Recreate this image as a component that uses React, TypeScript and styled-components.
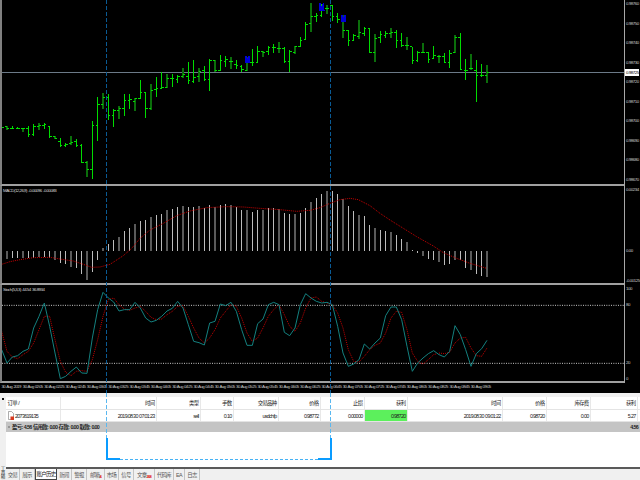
import React from "react"
import styled, { createGlobalStyle } from "styled-components"

const GlobalStyle = createGlobalStyle`
  html, body {
    margin: 0;
    padding: 0;
    background: #fff;
  }
  * {
    box-sizing: border-box;
  }
`

const Page = styled.div`
  position: relative;
  width: 640px;
  height: 480px;
  overflow: hidden;
  display: flex;
  flex-direction: column;
  font-family: "Liberation Sans", "Noto Sans CJK SC", sans-serif;
  font-size: 5.4px;
  letter-spacing: -0.7px;
  word-spacing: 0.6px;
  color: #222;
`

const ChartArea = styled.div`
  height: 393px;
  background: #000;
  display: flex;
  flex-direction: column;
  flex: none;
`

const Pane = styled.div<{ $h: number }>`
  height: ${p => p.$h}px;
  display: flex;
  flex: none;
`

const Plot = styled.div`
  position: relative;
  width: 624px;
  flex: none;
  border-left: 2px solid #808080;
  border-bottom: 2px solid #a0a0a0;

  svg {
    display: block;
  }
`

const PaneTitle = styled.span`
  position: absolute;
  left: 1px;
  top: 2px;
  font-size: 4.4px;
  letter-spacing: -0.5px;
  color: #d8d8d8;
  white-space: nowrap;
`

const PriceAxis = styled.div<{ $rows?: string }>`
  position: relative;
  flex: 1;
  min-width: 0;
  border-left: 1px solid #a8a8a8;
  color: #c8c8c8;
  font-size: 4.4px;
  letter-spacing: -0.45px;
  padding-left: 1px;
  padding-top: 1px;
  ${p =>
    p.$rows
      ? `display: grid; grid-template-rows: ${p.$rows};`
      : `display: flex; flex-direction: column; justify-content: space-between; padding-bottom: 3px;`}
`

const AxisLabel = styled.span`
  line-height: 6px;
  white-space: nowrap;
`

const LastPrice = styled.span`
  position: absolute;
  left: 0;
  top: 69px;
  width: 14px;
  height: 7px;
  line-height: 7px;
  padding-left: 1px;
  background: #fff;
  color: #000;
`

const TimeAxis = styled.div`
  height: 10px;
  display: flex;
  padding-left: 1px;
  color: #c8c8c8;
  font-size: 4.4px;
  letter-spacing: -0.6px;
`

const TimeLabel = styled.span`
  flex: 0 0 21.33px;
  min-width: 0;
  line-height: 8px;
  white-space: nowrap;
  padding-left: 0.5px;
`

const Panel = styled.div`
  flex: 1;
  display: flex;
  background: #f0f0f0;
`

const SideStrip = styled.div`
  width: 6px;
  flex: none;
  display: flex;
  flex-direction: column;
  justify-content: space-between;
  align-items: flex-start;
  padding-top: 5px;
`

const SideMark = styled.i`
  display: block;
  width: 2px;
  height: 2px;
  margin-left: 2px;
  background: #111;
`

const SideTitle = styled.span`
  writing-mode: vertical-rl;
  font-size: 4.6px;
  line-height: 5px;
  color: #333;
  height: 14px;
`

const Main = styled.div`
  flex: 1;
  min-width: 0;
  display: flex;
  flex-direction: column;
  padding-top: 4px;
`

const Table = styled.div`
  flex: 1;
  background: #fff;
  border-bottom: 2px solid #5a5a5a;
`

const Row = styled.div<{ $h: number }>`
  display: grid;
  grid-template-columns: 55px 96px 44px 33px 45px 42px 44px 43px 95px 44px 44px 47px;
  height: ${p => p.$h}px;
  border-bottom: 1px solid #e4e4e4;
`

const Cell = styled.div<{ $left?: boolean; $profit?: boolean }>`
  display: flex;
  align-items: center;
  justify-content: ${p => (p.$left ? "flex-start" : "flex-end")};
  gap: 1.5px;
  padding: 0 1.5px;
  white-space: nowrap;
  border-right: 1px solid #e8e8e8;
  background: ${p => (p.$profit ? "#5cf05c" : "transparent")};
`

const Summary = styled.div`
  height: 10px;
  display: flex;
  justify-content: space-between;
  align-items: center;
  padding: 0 2px;
  background: #c4c4c4;
  font-weight: 700;
  color: #222;
`

const SummaryLeft = styled.span`
  display: flex;
  align-items: center;
  gap: 2px;
`

const Dot = styled.i`
  display: block;
  width: 2px;
  height: 2px;
  border-radius: 50%;
  border: 0.5px solid #777;
`

const Tabs = styled.div`
  height: 11px;
  display: flex;
  flex: none;
  background: #f0f0f0;
`

const Tab = styled.div<{ $w: number; $active?: boolean }>`
  flex: 0 0 ${p => p.$w}px;
  display: flex;
  align-items: center;
  justify-content: center;
  color: ${p => (p.$active ? "#111" : "#555")};
  background: ${p => (p.$active ? "#fff" : "transparent")};
  border-right: 1px solid ${p => (p.$active ? "#444" : "#c4c4c4")};
  ${p => p.$active && "border-left: 1px solid #444; border-bottom: 1px solid #444;"}
`

const TabBadge = styled.sup`
  color: #e01010;
  font-size: 4px;
  font-weight: 700;
  line-height: 1;
  align-self: flex-end;
  margin-bottom: 1px;
`

/* trade markers lying over the charts and the history table */
const TradeLine = styled.div<{ $x: number; $top: number; $h: number; $color: string }>`
  position: absolute;
  left: ${p => p.$x}px;
  top: ${p => p.$top}px;
  width: 1px;
  height: ${p => p.$h}px;
  background: repeating-linear-gradient(
    to bottom,
    ${p => p.$color} 0 4px,
    transparent 4px 6px
  );
`

const TradeBracket = styled.div`
  position: absolute;
  left: 106px;
  top: 438px;
  width: 226px;
  height: 22px;
  border-left: 2.5px solid #0a9cff;
  border-right: 2.5px solid #0a9cff;
  display: flex;
  align-items: flex-end;
  justify-content: space-between;
`

const BracketFoot = styled.i<{ $w: number }>`
  display: block;
  width: ${p => p.$w}px;
  height: 2px;
  background: #0a9cff;
  flex: none;
`

const BracketDash = styled.i`
  display: block;
  flex: 1;
  height: 1px;
  margin-bottom: 0.5px;
  background: repeating-linear-gradient(to right, #45b2f5 0 3px, transparent 3px 5px);
`

// all chart data is in 3x page units, bars are 16 units apart
const barX = (i: number) => 5 + 16 * i

// high, low, open, close
const bars: number[][] = [
  [378, 390, 382, 382], [378, 390, 380, 385], [378, 388, 384, 384], [380, 387, 384, 384],
  [384, 395, 385, 385], [378, 412, 385, 403], [373, 407, 404, 378], [368, 390, 378, 375],
  [368, 386, 375, 372], [378, 415, 378, 410], [407, 418, 410, 415], [414, 441, 423, 437],
  [428, 441, 436, 432], [407, 434, 430, 428], [418, 441, 425, 437], [432, 488, 437, 487],
  [483, 531, 487, 508], [363, 536, 508, 376], [290, 423, 376, 313], [279, 328, 313, 292],
  [282, 360, 292, 345], [327, 380, 345, 331], [318, 358, 331, 325], [283, 348, 325, 300],
  [281, 327, 300, 298], [294, 334, 303, 295], [241, 296, 294, 278], [276, 354, 278, 324],
  [251, 330, 326, 270], [231, 291, 268, 265], [215, 268, 265, 263], [222, 265, 262, 235],
  [222, 262, 235, 235], [225, 249, 238, 228], [205, 235, 228, 222], [186, 252, 230, 241],
  [180, 249, 243, 232], [205, 246, 230, 215], [199, 244, 212, 238], [178, 274, 238, 180],
  [180, 217, 181, 212], [165, 213, 210, 182], [168, 201, 185, 178], [170, 207, 185, 185],
  [180, 206, 192, 195], [195, 217, 198, 208], [170, 214, 210, 185], [148, 197, 188, 188],
  [137, 190, 187, 155], [153, 170, 155, 158], [138, 165, 155, 142], [132, 160, 143, 142],
  [126, 160, 145, 145], [140, 188, 145, 184], [150, 217, 183, 155], [137, 162, 158, 140],
  [112, 141, 138, 120], [66, 120, 118, 72], [10, 97, 70, 48], [38, 65, 50, 47],
  [12, 50, 47, 24], [14, 42, 24, 26], [14, 64, 16, 48], [40, 68, 48, 57],
  [45, 115, 60, 92], [90, 138, 92, 120], [103, 122, 120, 107], [60, 117, 108, 98],
  [82, 107, 100, 84], [84, 160, 85, 157], [102, 186, 157, 115], [92, 130, 112, 103],
  [92, 115, 105, 100], [85, 113, 100, 96], [90, 144, 96, 120], [100, 140, 122, 135],
  [112, 150, 136, 136], [140, 192, 140, 182], [153, 186, 180, 158], [130, 160, 158, 157],
  [155, 188, 158, 178], [138, 178, 176, 165], [165, 190, 168, 170], [160, 190, 170, 186],
  [150, 203, 188, 160], [104, 160, 158, 112], [100, 210, 113, 208], [177, 240, 210, 210],
  [163, 210, 206, 205], [180, 305, 210, 225], [192, 230, 225, 225], [195, 248, 226, 217],
]

const arrows = [
  [742, 180],
  [965, 22],
  [1030, 57],
]

const macdZero = 198
const macdBars = [
  222, 222, 218, 218, 218, 220, 220, 215, 215, 218, 226, 235, 238, 245, 250, 266, 285, 262, 226, 188,
  178, 166, 156, 138, 128, 118, 108, 106, 96, 90, 86, 75, 71, 65, 62, 65, 66, 62, 68, 60,
  65, 60, 57, 60, 65, 74, 75, 80, 75, 74, 70, 70, 72, 84, 87, 86, 84, 68, 50, 40,
  26, 18, 18, 26, 42, 62, 78, 90, 94, 120, 128, 135, 138, 140, 150, 162, 172, 194, 204, 212,
  222, 226, 232, 241, 238, 226, 226, 250, 256, 268, 272, 276,
]

const macdSignal = [
  [5, 238], [30, 230], [60, 224], [100, 218], [150, 217], [180, 222], [220, 228], [250, 238], [275, 247],
  [300, 246], [330, 238], [370, 212], [395, 190], [420, 160], [450, 135], [490, 115], [530, 92], [570, 78],
  [620, 68], [680, 65], [730, 66], [780, 70], [840, 74], [890, 79], [930, 76], [960, 68], [990, 55],
  [1020, 44], [1050, 40], [1075, 44], [1110, 62], [1140, 85], [1170, 105], [1210, 130], [1250, 155],
  [1300, 183], [1330, 203], [1370, 220], [1410, 235], [1460, 250],
]

const stochMain = [
  200, 240, 222, 218, 205, 198, 135, 100, 60, 130, 210, 287, 280, 265, 252, 270, 271, 165, 80, 28,
  45, 57, 84, 80, 80, 58, 75, 105, 117, 112, 100, 84, 76, 55, 75, 125, 175, 179, 186, 120,
  115, 63, 68, 58, 85, 140, 187, 187, 122, 108, 65, 58, 65, 148, 158, 135, 65, 32, 45, 55,
  60, 58, 65, 130, 210, 250, 243, 230, 183, 198, 180, 165, 98, 72, 72, 110, 190, 265, 240, 225,
  212, 203, 215, 222, 205, 128, 155, 200, 250, 212, 197, 172,
]

const stochSignal = [
  145, 205, 222, 227, 215, 205, 180, 140, 100, 100, 170, 235, 268, 278, 265, 263, 265, 230, 170, 100,
  50, 45, 65, 78, 82, 75, 70, 85, 103, 110, 108, 95, 85, 70, 68, 100, 135, 165, 180, 165,
  140, 105, 85, 65, 70, 105, 150, 175, 165, 135, 100, 80, 65, 95, 130, 145, 120, 75, 45, 42,
  55, 60, 65, 90, 135, 200, 235, 237, 220, 200, 187, 180, 150, 105, 85, 88, 140, 210, 235, 243,
  230, 215, 210, 212, 208, 180, 165, 163, 195, 218, 220, 195,
]

const toPoints = (ys: number[]) => ys.map((y, i) => `${barX(i)},${y}`).join(" ")

const PriceChart = () => (
  <svg width={622} height={184} viewBox="6 0 1866 552" shapeRendering="crispEdges">
    <line x1={6} x2={1872} y1={217} y2={217} stroke="#6c7a88" strokeWidth={3} />
    {bars.map(([high, low, open, close], i) => {
      const x = barX(i)
      const dark = i % 3 === 1
      return (
        <g key={i}>
          <line
            x1={x}
            x2={x}
            y1={high}
            y2={low}
            stroke={dark ? "#0b6e0b" : "#00dc00"}
            strokeWidth={dark ? 6 : 3}
          />
          <line x1={x - 6} x2={x} y1={open} y2={open} stroke="#00e000" strokeWidth={3} />
          <line x1={x} x2={x + 6} y1={close} y2={close} stroke="#00e000" strokeWidth={3} />
        </g>
      )
    })}
    {arrows.map(([x, y]) => (
      <path
        key={x}
        d={`M${x - 7} ${y - 12}l4 0 3 8 3 -8 4 0 0 10 2 12 -16 0 0 -12z`}
        fill="#0000d8"
      />
    ))}
  </svg>
)

const MacdChart = () => (
  <svg width={622} height={97} viewBox="6 3 1866 291">
    <g shapeRendering="crispEdges">
      {macdBars.map((y, i) => (
        <line
          key={i}
          x1={barX(i)}
          x2={barX(i)}
          y1={macdZero}
          y2={y}
          stroke={i % 3 === 1 ? "#5a5a5a" : "#bcbcbc"}
          strokeWidth={i % 3 === 1 ? 6 : 3}
        />
      ))}
    </g>
    <polyline
      points={macdSignal.map(p => p.join(",")).join(" ")}
      fill="none"
      stroke="#c80000"
      strokeWidth={3}
      strokeDasharray="3 3"
    />
  </svg>
)

const StochChart = () => (
  <svg width={622} height={96} viewBox="6 6 1866 288">
    <line x1={6} x2={1872} y1={67} y2={67} stroke="#c8c8c8" strokeWidth={3} strokeDasharray="3 4" />
    <line x1={6} x2={1872} y1={241} y2={241} stroke="#c8c8c8" strokeWidth={3} strokeDasharray="3 4" />
    <polyline points={toPoints(stochSignal)} fill="none" stroke="#c00000" strokeWidth={3} strokeDasharray="3 3" />
    <polyline points={toPoints(stochMain)} fill="none" stroke="#14807f" strokeWidth={3} />
  </svg>
)

const DocIcon = () => (
  <svg width={6} height={9} viewBox="0 0 6 9">
    <path d="M.5.5h3l2 2v6h-5z" fill="#fff" stroke="#777" strokeWidth={0.6} />
    <rect x={2.5} y={5.5} width={3.5} height={3.5} fill="#d83a20" />
  </svg>
)

const timeLabels = [
  "30 Aug 2019",
  ...[
    "02:05", "02:25", "02:45", "03:05", "03:25", "03:45", "04:05", "04:25", "04:45", "05:05", "05:25",
    "05:45", "06:05", "06:25", "06:45", "07:05", "07:25", "07:45", "08:05", "08:25", "08:45", "09:05",
  ].map(t => `30 Aug ${t}`),
]

const priceLabels = [
  "0.98760", "0.98750", "0.98740", "0.98730", "0.98720", "0.98710", "0.98700", "0.98690", "0.98680", "0.98670",
]

const headers = ["时间", "类型", "手数", "交易品种", "价格", "止损", "获利", "时间", "价格", "库存费", "获利"]
const values = [
  "2019.08.30 07:01:23", "sell", "0.10", "usdchfp", "0.98772", "0.00000", "0.98720",
  "2019.08.30 09:01:22", "0.98720", "0.00", "5.27",
]

const tabs: { label: string; w: number; badge?: string; active?: boolean }[] = [
  { label: "交易", w: 14 },
  { label: "展示", w: 15 },
  { label: "账户历史", w: 22, active: true },
  { label: "新闻", w: 15 },
  { label: "警报", w: 15 },
  { label: "邮箱", w: 18, badge: "4" },
  { label: "市场", w: 14 },
  { label: "信号", w: 15 },
  { label: "文章", w: 21, badge: "268" },
  { label: "代码库", w: 19 },
  { label: "EA", w: 11 },
  { label: "日志", w: 15 },
]

export default function App() {
  return (
    <Page>
      <GlobalStyle />
      <ChartArea>
        <Pane $h={186}>
          <Plot>
            <PriceChart />
          </Plot>
          <PriceAxis>
            {priceLabels.map(l => (
              <AxisLabel key={l}>{l}</AxisLabel>
            ))}
            <LastPrice>0.98725</LastPrice>
          </PriceAxis>
        </Pane>
        <Pane $h={99}>
          <Plot>
            <MacdChart />
            <PaneTitle>MACD(12,26,9) -0.00096 -0.00083</PaneTitle>
          </Plot>
          <PriceAxis $rows="61px 30px 1fr">
            <AxisLabel>0.00234</AxisLabel>
            <AxisLabel>0.00</AxisLabel>
            <AxisLabel>-0.00125</AxisLabel>
          </PriceAxis>
        </Pane>
        <Pane $h={98}>
          <Plot>
            <StochChart />
            <PaneTitle>Stoch(5,3,3) 44.54 36.8934</PaneTitle>
          </Plot>
          <PriceAxis $rows="16px 58px 16px 1fr">
            <AxisLabel>100</AxisLabel>
            <AxisLabel>80</AxisLabel>
            <AxisLabel>20</AxisLabel>
            <AxisLabel>0</AxisLabel>
          </PriceAxis>
        </Pane>
        <TimeAxis>
          {timeLabels.map((l, i) => (
            <TimeLabel key={i}>{l}</TimeLabel>
          ))}
        </TimeAxis>
      </ChartArea>
      <Panel>
        <SideStrip>
          <SideMark />
          <SideTitle>工具箱</SideTitle>
        </SideStrip>
        <Main>
          <Table>
            <Row $h={13}>
              <Cell $left>订单 /</Cell>
              {headers.map((h, i) => (
                <Cell key={i}>{h}</Cell>
              ))}
            </Row>
            <Row $h={12}>
              <Cell $left>
                <DocIcon />
                2073619135
              </Cell>
              {values.map((v, i) => (
                <Cell key={i} $profit={i === 6}>
                  {v}
                </Cell>
              ))}
            </Row>
            <Summary>
              <SummaryLeft>
                <Dot />
                盈亏: 4.56 信用款: 0.00 存款: 0.00 取款: 0.00
              </SummaryLeft>
              <span>4.56</span>
            </Summary>
          </Table>
          <Tabs>
            {tabs.map(t => (
              <Tab key={t.label} $w={t.w} $active={t.active}>
                {t.label}
                {t.badge && <TabBadge>{t.badge}</TabBadge>}
              </Tab>
            ))}
          </Tabs>
        </Main>
      </Panel>
      <TradeLine $x={106} $top={0} $h={393} $color="#0a5a94" />
      <TradeLine $x={330} $top={0} $h={393} $color="#0a5a94" />
      <TradeLine $x={106} $top={393} $h={45} $color="#5ab8f0" />
      <TradeLine $x={330} $top={393} $h={45} $color="#5ab8f0" />
      <TradeBracket>
        <BracketFoot $w={12} />
        <BracketDash />
        <BracketFoot $w={12} />
      </TradeBracket>
    </Page>
  )
}
